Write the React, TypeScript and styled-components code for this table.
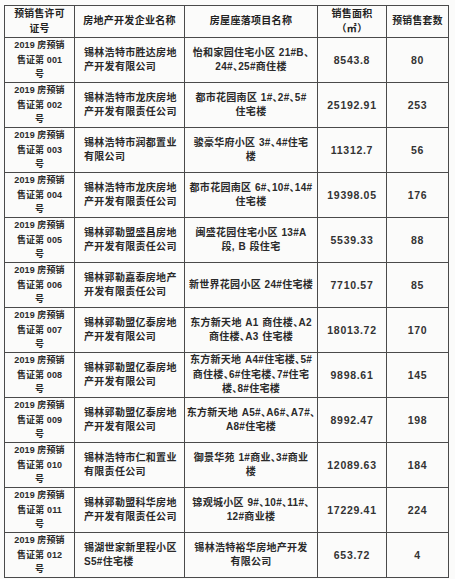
import styled, { createGlobalStyle } from "styled-components";

type Row = {
  no: string;
  company: string[];
  project: string[];
  area: string;
  units: string;
};

const rows: Row[] = [
  { no: "001", company: ["锡林浩特市胜达房地", "产开发有限公司"], project: ["怡和家园住宅小区 21#B、", "24#、25#商住楼"], area: "8543.8", units: "80" },
  { no: "002", company: ["锡林浩特市龙庆房地", "产开发有限责任公司"], project: ["都市花园南区 1#、2#、5#", "住宅楼"], area: "25192.91", units: "253" },
  { no: "003", company: ["锡林浩特市润都置业", "有限公司"], project: ["骏豪华府小区 3#、4#住宅", "楼"], area: "11312.7", units: "56" },
  { no: "004", company: ["锡林浩特市龙庆房地", "产开发有限责任公司"], project: ["都市花园南区 6#、10#、14#", "住宅楼"], area: "19398.05", units: "176" },
  { no: "005", company: ["锡林郭勒盟盛昌房地", "产开发有限责任公司"], project: ["闽盛花园住宅小区 13#A", "段, B 段住宅"], area: "5539.33", units: "88" },
  { no: "006", company: ["锡林郭勒嘉泰房地产", "开发有限责任公司"], project: ["新世界花园小区 24#住宅楼"], area: "7710.57", units: "85" },
  { no: "007", company: ["锡林郭勒盟亿泰房地", "产开发有限公司"], project: ["东方新天地 A1 商住楼、A2", "商住楼、A3 住宅楼"], area: "18013.72", units: "170" },
  { no: "008", company: ["锡林郭勒盟亿泰房地", "产开发有限公司"], project: ["东方新天地 A4#住宅楼、5#", "商住楼、6#住宅楼、7#住宅", "楼、8#住宅楼"], area: "9898.61", units: "145" },
  { no: "009", company: ["锡林郭勒盟亿泰房地", "产开发有限公司"], project: ["东方新天地 A5#、A6#、A7#、", "A8#住宅楼"], area: "8992.47", units: "198" },
  { no: "010", company: ["锡林浩特市仁和置业", "有限责任公司"], project: ["御景华苑 1#商业、3#商业", "楼"], area: "12089.63", units: "184" },
  { no: "011", company: ["锡林郭勒盟科华房地", "产开发有限责任公司"], project: ["锦观城小区 9#、10#、11#、", "12#商业楼"], area: "17229.41", units: "224" },
  { no: "012", company: ["锡湖世家新里程小区", "S5#住宅楼"], project: ["锡林浩特裕华房地产开发", "有限公司"], area: "653.72", units: "4" },
];

const Lines = ({ lines }: { lines: string[] }) => (
  <>
    {lines.map((l, i) => (
      <Line key={i}>{l}</Line>
    ))}
  </>
);

const App = () => {
  return (
    <Page>
      <GlobalStyle />
      <Table>
        <colgroup>
          <col style={{ width: 70 }} />
          <col style={{ width: 110 }} />
          <col style={{ width: 133 }} />
          <col style={{ width: 69 }} />
          <col style={{ width: 62 }} />
        </colgroup>
        <thead>
          <HeadRow>
            <Th $size={9.8}>
              <Lines lines={["预销售许可", "证号"]} />
            </Th>
            <Th>房地产开发企业名称</Th>
            <Th>房屋座落项目名称</Th>
            <Th>
              <Lines lines={["销售面积", "（㎡）"]} />
            </Th>
            <Th $size={9.8}>预销售套数</Th>
          </HeadRow>
        </thead>
        <tbody>
          {rows.map((r) => (
            <BodyRow key={r.no}>
              <CertTd>
                <Lines lines={["2019 房预销", `售证第 ${r.no}`, "号"]} />
              </CertTd>
              <Td $align="left">
                <Lines lines={r.company} />
              </Td>
              <ProjectTd>
                <Lines lines={r.project} />
              </ProjectTd>
              <NumTd>{r.area}</NumTd>
              <NumTd>{r.units}</NumTd>
            </BodyRow>
          ))}
        </tbody>
      </Table>
    </Page>
  );
};

const GlobalStyle = createGlobalStyle`
  html, body {
    margin: 0;
    padding: 0;
    background: #fbfbfa;
  }
  body {
    font-family: "Liberation Sans", "Noto Sans CJK SC", sans-serif;
    color: #222;
  }
`;

const Page = styled.div`
  width: 455px;
  height: 579px;
  padding: 5px 0 0 4px;
  box-sizing: border-box;
  overflow: hidden;
`;

const Table = styled.table`
  width: 444px;
  table-layout: fixed;
  border-collapse: collapse;
  border: 1.5px solid #3a3a3a;
`;

const HeadRow = styled.tr`
  height: 32px;
`;

const BodyRow = styled.tr`
  height: 45px;
`;

const cell = `
  border: 1px solid #4a4a4a;
  padding: 0;
  vertical-align: middle;
  font-size: 10px;
  line-height: 14.5px;
  font-weight: 700;
  color: #2a2a2a;
  letter-spacing: 0.3px;
`;

const Th = styled.th<{ $size?: number }>`
  ${cell}
  text-align: center;
  color: #222;
  font-size: ${(p) => p.$size ?? 10}px;
`;

const Td = styled.td<{ $align?: "left" | "center" }>`
  ${cell}
  text-align: ${(p) => p.$align ?? "center"};
  padding-left: ${(p) => (p.$align === "left" ? "9px" : "0")};
`;

const CertTd = styled.td`
  ${cell}
  text-align: center;
  font-size: 9px;
  letter-spacing: 0.1px;
`;

const ProjectTd = styled.td`
  ${cell}
  text-align: center;
  font-feature-settings: "halt";
  word-spacing: 0.5px;
`;

const NumTd = styled.td`
  ${cell}
  text-align: center;
  font-size: 10.5px;
  color: #333;
  letter-spacing: 0.7px;
`;

const Line = styled.div`
  white-space: nowrap;
`;

export default App;
